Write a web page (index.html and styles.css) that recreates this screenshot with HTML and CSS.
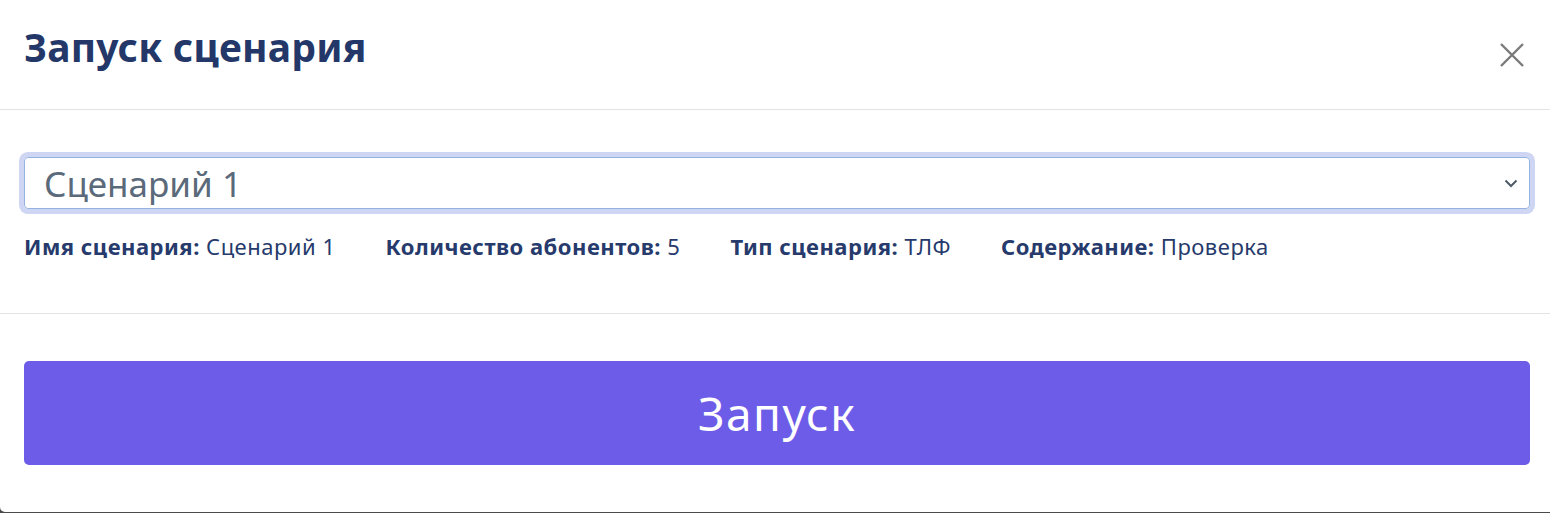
FILE: index.html
```html
<!DOCTYPE html>
<html>

<head>
    <meta charset="UTF-8">
    <title>Запуск сценария</title>
    <link rel="stylesheet" href="styles.css">
</head>

<body>
    <div class="modal">
        <div class="modal-header">
            <h2 class="modal-title">Запуск сценария</h2>
            <button class="close" type="button" aria-label="Закрыть">
                <svg width="26" height="26" viewBox="0 0 26 26">
                    <path d="M2 2 L24 24 M24 2 L2 24" stroke="#7a7a7a" stroke-width="2.4" fill="none"/>
                </svg>
            </button>
        </div>

        <div class="modal-body">
            <div class="select">
                <span class="select-value">Сценарий 1</span>
                <svg class="select-arrow" width="14" height="10" viewBox="0 0 14 10">
                    <path d="M1.5 2.5 L7 8 L12.5 2.5" stroke="#4f5b66" stroke-width="2" fill="none"/>
                </svg>
            </div>

            <div class="info">
                <span class="info-item"><b>Имя сценария:</b> Сценарий 1</span>
                <span class="info-item"><b>Количество абонентов:</b> 5</span>
                <span class="info-item"><b>Тип сценария:</b> ТЛФ</span>
                <span class="info-item"><b>Содержание:</b> Проверка</span>
            </div>
        </div>

        <div class="modal-footer">
            <button class="btn-run" type="button">Запуск</button>
        </div>
    </div>
</body>

</html>
```

FILE: styles.css
```css
* {
    margin: 0;
    padding: 0;
    box-sizing: border-box;
}

body {
    background-color: #4a4a4a;
    font-family: "Noto Sans", "Open Sans", sans-serif;
    color: #263a6c;
}

.modal {
    background-color: #fff;
    height: 512px;
    border-bottom-left-radius: 5px;
}

.modal-header {
    height: 110px;
    padding: 0 24px;
    display: flex;
    align-items: center;
    justify-content: space-between;
    border-bottom: 1px solid #e3e3e3;
}

.modal-title {
    font-size: 39px;
    font-weight: 700;
    letter-spacing: 0.2px;
    color: #243769;
    margin-top: -16px;
}

.close {
    border: none;
    background: none;
    width: 26px;
    height: 26px;
    margin-right: 1px;
    display: flex;
}

.modal-body {
    height: 204px;
    padding: 47px 20px 0 24px;
    border-bottom: 1px solid #e3e3e3;
}

.select {
    height: 52px;
    border: 1px solid #94b3e3;
    border-radius: 4px;
    box-shadow: 0 0 0 5px #cfd6f4;
    display: flex;
    align-items: center;
    justify-content: space-between;
    padding: 0 11px 0 19px;
}

.select-value {
    font-size: 35px;
    color: #5b6a7b;
}

.info {
    display: flex;
    gap: 50px;
    margin-top: 22px;
    font-size: 22px;
    letter-spacing: 0.5px;
}

.info b {
    font-weight: 700;
}

.modal-footer {
    padding: 47px 20px 0 24px;
}

.btn-run {
    width: 100%;
    height: 104px;
    border: none;
    border-radius: 5px;
    background-color: #6c5ce7;
    color: #fff;
    font-family: "Noto Sans", "Open Sans", sans-serif;
    font-size: 46px;
    letter-spacing: 1.5px;
}
```
